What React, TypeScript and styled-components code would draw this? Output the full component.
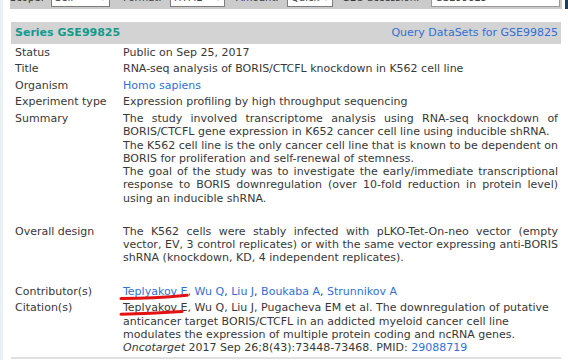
import React from 'react'
import styled, { createGlobalStyle } from 'styled-components'

const GlobalStyle = createGlobalStyle`
  html, body {
    margin: 0;
    padding: 0;
    background: #fff;
    overflow: hidden;
  }
  body {
    font-family: 'DejaVu Sans', Verdana, sans-serif;
    color: #383838;
  }
`

const Page = styled.div`
  position: relative;
  width: 568px;
  height: 360px;
  overflow: hidden;
  box-sizing: border-box;
  border-left: 3px solid #e9f0f6;
  padding-left: 7px;
`

const TopRow = styled.div`
  display: flex;
  gap: 3px;
  height: 22px;
  margin-top: -13px;
`

const SearchBar = styled.div`
  flex-shrink: 0;
  width: 552px;
  display: flex;
  align-items: flex-end;
  padding-bottom: 2px;
  box-sizing: border-box;
  background: #cbcbcb;
  font-size: 10px;
`

const BarLabel = styled.span<{ width: number; offset?: number }>`
  flex-shrink: 0;
  width: ${p => p.width}px;
  margin-left: ${p => p.offset || 0}px;
  line-height: 18px;
  color: #333;
`

const SelectBox = styled.div<{ width: number }>`
  position: relative;
  flex-shrink: 0;
  width: ${p => p.width}px;
  height: 18px;
  box-sizing: border-box;
  border: 1px solid #7c7c7c;
  background: #fff;
  padding-left: 3px;
  line-height: 16px;
  color: #444;
`

const Chevron = styled.span`
  position: absolute;
  right: 3px;
  top: 0;
  font-size: 8px;
  color: #888;
`

const TextInput = styled(SelectBox)`
  border-color: #9a9a9a;
`

const GoButton = styled.div`
  flex-shrink: 0;
  width: 24px;
  background: #1d3c6c;
`

const Table = styled.div`
  width: 550px;
  margin: 13px 0 0 1px;
  font-size: 11px;
  line-height: 13.3px;
`

const Header = styled.div`
  display: flex;
  justify-content: space-between;
  align-items: center;
  height: 22px;
  padding: 0 3px 0 4px;
  background: #d3d3d3;
`

const SeriesTitle = styled.span`
  font-weight: bold;
  color: #139a8c;
`

const Link = styled.a<{ plain?: boolean }>`
  color: #3170d4;
  text-decoration: none;
`

const Row = styled.div`
  display: grid;
  grid-template-columns: 112px 1fr;
  padding: 1.65px 0;
  min-height: 13.3px;
`

const Label = styled.div`
  padding-left: 4px;
`

const Value = styled.div<{ justify?: boolean }>`
  padding-right: 3px;
  text-align: ${p => (p.justify ? 'justify' : 'left')};
`

const Para = styled.div``

const Divider = styled.div`
  height: 2px;
  margin-top: 1px;
  background: #e0e0e0;
`

const Marks = styled.svg`
  position: absolute;
  left: 0;
  top: 0;
  pointer-events: none;
`

const contributors = ['Teplyakov E', 'Wu Q', 'Liu J', 'Boukaba A', 'Strunnikov A']

export default function App() {
  return (
    <>
      <GlobalStyle />
      <Page>
        <TopRow>
          <SearchBar>
            <BarLabel width={41}>Scope:</BarLabel>
            <SelectBox width={59}>
              Self<Chevron>▼</Chevron>
            </SelectBox>
            <BarLabel width={47} offset={13}>Format:</BarLabel>
            <SelectBox width={55}>
              HTML<Chevron>▼</Chevron>
            </SelectBox>
            <BarLabel width={51} offset={11}>Amount:</BarLabel>
            <SelectBox width={46}>
              Quick<Chevron>▼</Chevron>
            </SelectBox>
            <BarLabel width={89} offset={9}>GEO accession:</BarLabel>
            <TextInput width={129}>GSE99825</TextInput>
          </SearchBar>
          <GoButton />
        </TopRow>

        <Table>
          <Header>
            <SeriesTitle>Series GSE99825</SeriesTitle>
            <Link>Query DataSets for GSE99825</Link>
          </Header>
          <Row>
            <Label>Status</Label>
            <Value>Public on Sep 25, 2017</Value>
          </Row>
          <Row>
            <Label>Title</Label>
            <Value>RNA-seq analysis of BORIS/CTCFL knockdown in K562 cell line</Value>
          </Row>
          <Row>
            <Label>Organism</Label>
            <Value>
              <Link>Homo sapiens</Link>
            </Value>
          </Row>
          <Row>
            <Label>Experiment type</Label>
            <Value>Expression profiling by high throughput sequencing</Value>
          </Row>
          <Row>
            <Label>Summary</Label>
            <Value justify>
              <Para>
                The study involved transcriptome analysis using RNA-seq knockdown of BORIS/CTCFL gene
                expression in K652 cancer cell line using inducible shRNA.
              </Para>
              <Para>
                The K562 cell line is the only cancer cell line that is known to be dependent on BORIS
                for proliferation and self-renewal of stemness.
              </Para>
              <Para>
                The goal of the study was to investigate the early/immediate transcriptional response to
                BORIS downregulation (over 10-fold reduction in protein level) using an inducible shRNA.
              </Para>
            </Value>
          </Row>
          <Row />
          <Row>
            <Label>Overall design</Label>
            <Value justify>
              The K562 cells were stably infected with pLKO-Tet-On-neo vector (empty vector, EV, 3
              control replicates) or with the same vector expressing anti-BORIS shRNA (knockdown, KD, 4
              independent replicates).
            </Value>
          </Row>
          <Row />
          <Row>
            <Label>Contributor(s)</Label>
            <Value>
              {contributors.map((name, i) => (
                <React.Fragment key={name}>
                  {i > 0 && ', '}
                  <Link>{name}</Link>
                </React.Fragment>
              ))}
            </Value>
          </Row>
          <Row>
            <Label>Citation(s)</Label>
            <Value>
              Teplyakov E, Wu Q, Liu J, Pugacheva EM et al. The downregulation of putative anticancer
              target BORIS/CTCFL in an addicted myeloid cancer cell line modulates the expression of
              multiple protein coding and ncRNA genes. <i>Oncotarget</i> 2017 Sep 26;8(43):73448-73468.
              PMID: <Link>29088719</Link>
            </Value>
          </Row>
          <Divider />
        </Table>

        {/* hand-drawn marker strokes over the first author */}
        <Marks width={568} height={360}>
          <path
            d="M118 298.5 Q150 298.5 184 295.3"
            fill="none"
            stroke="#e31212"
            strokeWidth={3}
            strokeLinecap="round"
          />
          <path
            d="M118 314.2 Q148 314 179 311.6"
            fill="none"
            stroke="#e31212"
            strokeWidth={3}
            strokeLinecap="round"
          />
        </Marks>
      </Page>
    </>
  )
}
